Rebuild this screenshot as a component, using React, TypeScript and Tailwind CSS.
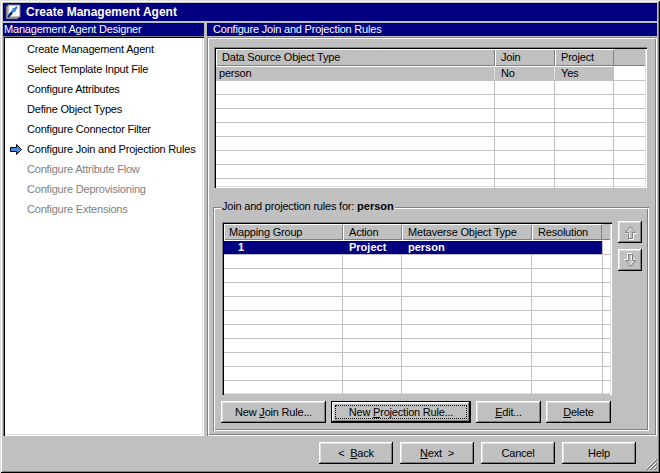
import React from 'react';

const raised =
  'bg-[#c0c0c0] shadow-[inset_-1px_-1px_#000,inset_1px_1px_#fff,inset_-2px_-2px_#808080,inset_2px_2px_#dfdfdf]';
const sunken =
  'p-[2px] shadow-[inset_1px_1px_#808080,inset_2px_2px_#000,inset_-1px_-1px_#fff,inset_-2px_-2px_#dfdfdf]';
const etched =
  'shadow-[inset_1px_1px_#808080,inset_2px_2px_#fff,inset_-1px_-1px_#fff,inset_-2px_-2px_#808080]';
const headCell = 'flex items-center shadow-[inset_1px_1px_#fff,inset_-1px_-1px_#808080]';

const steps = [
  { label: 'Create Management Agent', state: 'done' },
  { label: 'Select Template Input File', state: 'done' },
  { label: 'Configure Attributes', state: 'done' },
  { label: 'Define Object Types', state: 'done' },
  { label: 'Configure Connector Filter', state: 'done' },
  { label: 'Configure Join and Projection Rules', state: 'current' },
  { label: 'Configure Attribute Flow', state: 'off' },
  { label: 'Configure Deprovisioning', state: 'off' },
  { label: 'Configure Extensions', state: 'off' },
];

function AppIcon() {
  return (
    <svg width="16" height="16" viewBox="0 0 16 16">
      <rect x="1" y="2" width="12" height="13" fill="#c0c0c0" stroke="#404040" />
      <rect x="3" y="1" width="12" height="12" fill="#fff" stroke="#808080" />
      <path d="M4 11 L12 3" stroke="#2060d0" strokeWidth="2" />
      <circle cx="9" cy="6" r="2" fill="#3a8ae0" />
      <path d="M3 13 L7 9" stroke="#0a246a" strokeWidth="2" />
    </svg>
  );
}

function NavArrow() {
  return (
    <svg width="13" height="11" viewBox="0 0 13 11">
      <path d="M0.5 3.5 H6.5 V0.5 L11.5 5.5 L6.5 10.5 V7.5 H0.5 Z" fill="#3d8ce8" stroke="#000" />
    </svg>
  );
}

function ArrowUp({ down }: { down?: boolean }) {
  const d = 'M7.5 1.5 L12.5 7.5 H9.5 V13.5 H5.5 V7.5 H2.5 Z';
  return (
    <svg width="15" height="15" viewBox="0 0 15 15" className={down ? 'rotate-180' : ''}>
      <path d={d} fill="none" stroke="#fff" transform="translate(1 1)" />
      <path d={d} fill="none" stroke="#808080" />
    </svg>
  );
}

function Button({ children, w, isDefault }: { children: React.ReactNode; w: string; isDefault?: boolean }) {
  if (isDefault) {
    return (
      <div className={`${w} h-[22px] border border-black flex`}>
        <div className={`${raised} flex-1 flex items-center justify-center p-[3px]`}>
          <div className="w-full h-full border border-dotted border-black flex items-center justify-center">
            {children}
          </div>
        </div>
      </div>
    );
  }
  return <div className={`${raised} ${w} h-[22px] flex items-center justify-center`}>{children}</div>;
}

export default function App() {
  const topRows = Array.from({ length: 9 });
  const bottomRows = Array.from({ length: 11 });

  return (
    <div
      className="w-[660px] h-[473px] bg-[#c0c0c0] p-[3px] flex flex-col text-[11px] tracking-[-0.2px] text-black overflow-hidden relative shadow-[inset_1px_1px_#dfdfdf,inset_-1px_-1px_#000,inset_2px_2px_#fff,inset_-2px_-2px_#808080]"
      style={{ fontFamily: '"Liberation Sans", Arial, sans-serif' }}
    >
      {/* title bar */}
      <div className="h-[18px] bg-[#000080] flex items-center gap-[5px] pl-[2px] text-white font-bold text-[12px] tracking-normal">
        <AppIcon />
        <span>Create Management Agent</span>
      </div>

      <div className="mt-[2px] h-[413px] flex gap-[3px]">
        {/* left column */}
        <div className="w-[201px] flex flex-col">
          <div className="h-[13px] bg-[#000080] text-white leading-[13px] pl-[1px]">Management Agent Designer</div>
          <div className={`${sunken} flex-1 bg-white flex flex-col overflow-hidden`}>
            <div className="flex flex-col pt-[1px]">
              {steps.map((s) => (
                <div key={s.label} className="h-[20px] flex items-center whitespace-nowrap">
                  <div className="w-[22px] shrink-0 flex justify-end pr-[4px]">{s.state === 'current' && <NavArrow />}</div>
                  <span className={s.state === 'off' ? 'text-[#808080]' : 'text-black'}>{s.label}</span>
                </div>
              ))}
            </div>
          </div>
        </div>

        {/* right column */}
        <div className="w-[450px] flex flex-col">
          <div className="h-[13px] bg-[#000080] text-white leading-[13px] pl-[6px]">Configure Join and Projection Rules</div>
          <div className={`${etched} flex-1 mt-[1px] p-[2px] flex flex-col`}>
            {/* top table */}
            <div className={`${sunken} bg-white ml-[5px] mt-[8px] w-[433px] h-[141px] overflow-hidden`}>
              <div className="flex h-[17px] bg-[#c0c0c0]">
                <div className={`${headCell} w-[279px] pl-[6px]`}>Data Source Object Type</div>
                <div className={`${headCell} w-[60px] pl-[6px]`}>Join</div>
                <div className={`${headCell} w-[59px] pl-[6px] shadow-[inset_1px_1px_#fff,inset_-1px_-1px_#404040]`}>Project</div>
                <div className="flex-1 bg-[#c0c0c0] shadow-[inset_0_-1px_#808080]" />
              </div>
              <div className="h-px bg-white" />
              {topRows.map((_, i) => (
                <div key={i} className="flex h-[14px] border-b border-b-[#c0c0c0]">
                  <div className={`w-[279px] pl-[3px] border-r leading-[13px] ${i === 0 ? 'bg-[#c0c0c0] border-r-[#dfdfdf]' : 'border-r-[#c0c0c0]'}`}>
                    {i === 0 ? 'person' : ''}
                  </div>
                  <div className={`w-[60px] pl-[6px] border-r leading-[13px] ${i === 0 ? 'bg-[#c0c0c0] border-r-[#dfdfdf]' : 'border-r-[#c0c0c0]'}`}>
                    {i === 0 ? 'No' : ''}
                  </div>
                  <div className={`w-[59px] pl-[6px] border-r border-r-[#c0c0c0] leading-[13px] ${i === 0 ? 'bg-[#c0c0c0]' : ''}`}>
                    {i === 0 ? 'Yes' : ''}
                  </div>
                  <div className="flex-1" />
                </div>
              ))}
            </div>

            {/* group box */}
            <div className={`${etched} relative ml-[4px] mt-[19px] w-[436px] h-[224px] pt-[15px] pl-[9px] flex`}>
              <div className="absolute -top-[7px] left-[8px] bg-[#c0c0c0] px-[1px] leading-[13px] whitespace-nowrap">
                Join and projection rules for: <span className="font-bold tracking-normal">person</span>
              </div>
              <div className="flex flex-col">
                <div className={`${sunken} bg-white w-[390px] h-[173px] overflow-hidden`}>
                  <div className="flex h-[16px] bg-[#c0c0c0]">
                    <div className={`${headCell} w-[119px] pl-[5px]`}>Mapping Group</div>
                    <div className={`${headCell} w-[59px] pl-[6px]`}>Action</div>
                    <div className={`${headCell} w-[130px] pl-[6px]`}>Metaverse Object Type</div>
                    <div className={`${headCell} w-[70px] pl-[6px] shadow-[inset_1px_1px_#fff,inset_-1px_-1px_#404040]`}>Resolution</div>
                    <div className="flex-1 shadow-[inset_0_-1px_#808080]" />
                  </div>
                  <div className="h-px bg-white" />
                  {bottomRows.map((_, i) => (
                    <div key={i} className="flex h-[14px] border-b border-b-[#c0c0c0]">
                      <div className={`w-[379px] flex ${i === 0 ? 'bg-[#000080] text-white font-bold tracking-normal' : ''}`}>
                        <div className={`w-[119px] pl-[14px] leading-[13px] border-r ${i === 0 ? 'border-r-[#000080]' : 'border-r-[#c0c0c0]'}`}>{i === 0 ? '1' : ''}</div>
                        <div className={`w-[59px] pl-[6px] leading-[13px] border-r ${i === 0 ? 'border-r-[#000080]' : 'border-r-[#c0c0c0]'}`}>{i === 0 ? 'Project' : ''}</div>
                        <div className={`w-[130px] pl-[6px] leading-[13px] border-r ${i === 0 ? 'border-r-[#000080]' : 'border-r-[#c0c0c0]'}`}>{i === 0 ? 'person' : ''}</div>
                        <div className="w-[71px] border-r border-r-[#c0c0c0]" />
                      </div>
                      <div className="flex-1" />
                    </div>
                  ))}
                </div>
                <div className="flex gap-[5px] mt-[6px] -ml-px">
                  <Button w="w-[105px]">
                    <span>New <u>J</u>oin Rule...</span>
                  </Button>
                  <Button w="w-[140px]" isDefault>
                    <span>New <u>P</u>rojection Rule...</span>
                  </Button>
                  <Button w="w-[65px]">
                    <span><u>E</u>dit...</span>
                  </Button>
                  <Button w="w-[65px]">
                    <span><u>D</u>elete</span>
                  </Button>
                </div>
              </div>
              <div className="ml-[6px] -mt-px flex flex-col gap-[6px]">
                <div className={`${raised} w-[24px] h-[22px] flex items-center justify-center`}>
                  <ArrowUp />
                </div>
                <div className={`${raised} w-[24px] h-[22px] flex items-center justify-center`}>
                  <ArrowUp down />
                </div>
              </div>
            </div>
          </div>
        </div>
      </div>

      {/* footer */}
      <div className="h-[34px] flex items-center justify-end gap-[7px] pr-[21px]">
        <Button w="w-[74px]">
          <span>&lt;&nbsp; <u>B</u>ack</span>
        </Button>
        <Button w="w-[74px]">
          <span><u>N</u>ext &nbsp;&gt;</span>
        </Button>
        <Button w="w-[74px]">
          <span>Cancel</span>
        </Button>
        <Button w="w-[74px]">
          <span>Help</span>
        </Button>
      </div>

      <svg className="absolute right-[3px] bottom-[3px]" width="12" height="12" viewBox="0 0 12 12">
        <path d="M11 1 L1 11 M11 5 L5 11 M11 9 L9 11" stroke="#fff" />
        <path d="M12 1 L1 12 M12 2 L2 12 M12 5 L5 12 M12 6 L6 12 M12 9 L9 12 M12 10 L10 12" stroke="#808080" />
      </svg>
    </div>
  );
}
